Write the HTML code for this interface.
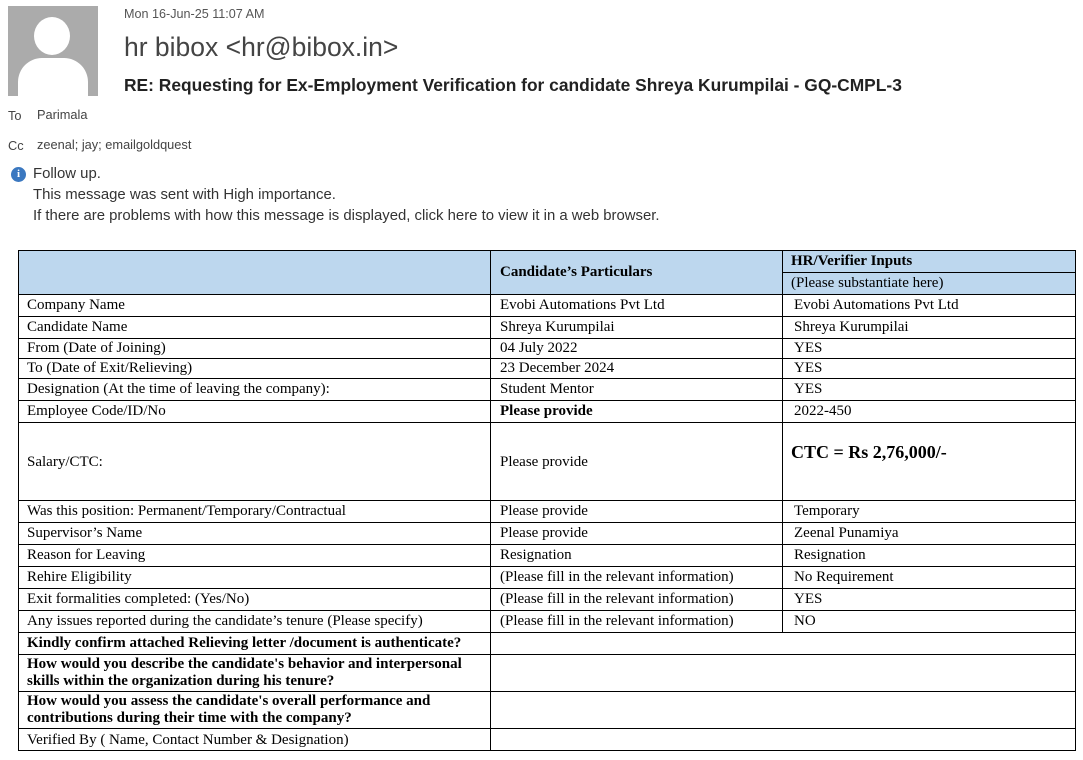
<!DOCTYPE html>
<html><head><meta charset="utf-8"><style>
body{margin:0;width:1083px;height:760px;background:#fff;position:relative;overflow:hidden;font-family:"Liberation Sans","DejaVu Sans",sans-serif;}
.a{position:absolute;white-space:nowrap}
.c{position:absolute;box-sizing:border-box;border-left:1px solid #000;border-top:1px solid #000;display:flex;align-items:center;font-family:"Liberation Serif",serif;font-size:15px;color:#000;white-space:nowrap;line-height:17px}
.b{font-weight:bold}
.blue{background:#bdd7ee}
</style></head><body>
<div class="a" style="left:8px;top:6px;width:90px;height:90px;background:#ababab;overflow:hidden">
<div style="position:absolute;left:26px;top:11px;width:36px;height:38px;border-radius:50%;background:#fff"></div>
<div style="position:absolute;left:10px;top:52px;width:70px;height:50px;border-radius:24px 24px 0 0;background:#fff"></div>
</div>
<div class="a" style="left:124px;top:7px;font-size:12.6px;color:#555">Mon 16-Jun-25 11:07 AM</div>
<div class="a" style="left:124px;top:32px;font-size:26.5px;color:#444">hr bibox &lt;hr@bibox.in&gt;</div>
<div class="a" style="left:124px;top:75px;font-size:17.4px;font-weight:bold;color:#222">RE: Requesting for Ex-Employment Verification for candidate Shreya Kurumpilai - GQ-CMPL-3</div>
<div class="a" style="left:8px;top:108px;font-size:12.8px;color:#444">To</div>
<div class="a" style="left:37px;top:107px;font-size:12.8px;color:#444">Parimala</div>
<div class="a" style="left:8px;top:138px;font-size:12.8px;color:#444">Cc</div>
<div class="a" style="left:37px;top:137px;font-size:12.8px;color:#444">zeenal; jay; emailgoldquest</div>
<div class="a" style="left:11px;top:167px;width:15px;height:15px;border-radius:50%;background:#3b78c0;color:#fff;font-size:11px;font-weight:bold;text-align:center;line-height:15px;font-family:'Liberation Serif',serif">i</div>
<div class="a" style="left:33px;top:166px;font-size:14.9px;color:#333">Follow up.</div>
<div class="a" style="left:33px;top:187px;font-size:14.9px;color:#333">This message was sent with High importance.</div>
<div class="a" style="left:33px;top:208px;font-size:14.9px;color:#333">If there are problems with how this message is displayed, click here to view it in a web browser.</div>

<div style="position:absolute;left:18px;top:250px;width:1058px;height:501px;box-sizing:border-box;border-right:1px solid #000;border-bottom:1px solid #000"></div>
<div class="c blue" style="left:18px;top:250px;width:472px;height:44px"></div>
<div class="c blue b" style="left:490px;top:250px;width:292px;height:44px;padding-left:9px">Candidate’s Particulars</div>
<div class="c blue b" style="left:782px;top:250px;width:293px;height:22px;padding-left:8px">HR/Verifier Inputs</div>
<div class="c blue" style="left:782px;top:272px;width:293px;height:22px;padding-left:8px">(Please substantiate here)</div>

<div class="c" style="left:18px;top:294px;width:472px;height:22px;padding-left:8px">Company Name</div>
<div class="c" style="left:490px;top:294px;width:292px;height:22px;padding-left:9px">Evobi Automations Pvt Ltd</div>
<div class="c" style="left:782px;top:294px;width:293px;height:22px;padding-left:11px">Evobi Automations Pvt Ltd</div>

<div class="c" style="left:18px;top:316px;width:472px;height:22px;padding-left:8px">Candidate Name</div>
<div class="c" style="left:490px;top:316px;width:292px;height:22px;padding-left:9px">Shreya Kurumpilai</div>
<div class="c" style="left:782px;top:316px;width:293px;height:22px;padding-left:11px">Shreya Kurumpilai</div>

<div class="c" style="left:18px;top:338px;width:472px;height:20px;padding-left:8px">From (Date of Joining)</div>
<div class="c" style="left:490px;top:338px;width:292px;height:20px;padding-left:9px">04 July 2022</div>
<div class="c" style="left:782px;top:338px;width:293px;height:20px;padding-left:11px">YES</div>

<div class="c" style="left:18px;top:358px;width:472px;height:20px;padding-left:8px">To (Date of Exit/Relieving)</div>
<div class="c" style="left:490px;top:358px;width:292px;height:20px;padding-left:9px">23 December 2024</div>
<div class="c" style="left:782px;top:358px;width:293px;height:20px;padding-left:11px">YES</div>

<div class="c" style="left:18px;top:378px;width:472px;height:22px;padding-left:8px">Designation (At the time of leaving the company):</div>
<div class="c" style="left:490px;top:378px;width:292px;height:22px;padding-left:9px">Student Mentor</div>
<div class="c" style="left:782px;top:378px;width:293px;height:22px;padding-left:11px">YES</div>

<div class="c" style="left:18px;top:400px;width:472px;height:22px;padding-left:8px">Employee Code/ID/No</div>
<div class="c b" style="left:490px;top:400px;width:292px;height:22px;padding-left:9px">Please provide</div>
<div class="c" style="left:782px;top:400px;width:293px;height:22px;padding-left:11px">2022-450</div>

<div class="c" style="left:18px;top:422px;width:472px;height:78px;padding-left:8px;padding-top:1px">Salary/CTC:</div>
<div class="c" style="left:490px;top:422px;width:292px;height:78px;padding-left:9px;padding-top:1px">Please provide</div>
<div class="c b" style="left:782px;top:422px;width:293px;height:78px;padding-left:8px;align-items:flex-start;padding-top:19px;font-size:18px;line-height:20px">CTC = Rs 2,76,000/-</div>

<div class="c" style="left:18px;top:500px;width:472px;height:22px;padding-left:8px">Was this position: Permanent/Temporary/Contractual</div>
<div class="c" style="left:490px;top:500px;width:292px;height:22px;padding-left:9px">Please provide</div>
<div class="c" style="left:782px;top:500px;width:293px;height:22px;padding-left:11px">Temporary</div>

<div class="c" style="left:18px;top:522px;width:472px;height:22px;padding-left:8px">Supervisor’s Name</div>
<div class="c" style="left:490px;top:522px;width:292px;height:22px;padding-left:9px">Please provide</div>
<div class="c" style="left:782px;top:522px;width:293px;height:22px;padding-left:11px">Zeenal Punamiya</div>

<div class="c" style="left:18px;top:544px;width:472px;height:22px;padding-left:8px">Reason for Leaving</div>
<div class="c" style="left:490px;top:544px;width:292px;height:22px;padding-left:9px">Resignation</div>
<div class="c" style="left:782px;top:544px;width:293px;height:22px;padding-left:11px">Resignation</div>

<div class="c" style="left:18px;top:566px;width:472px;height:22px;padding-left:8px">Rehire Eligibility</div>
<div class="c" style="left:490px;top:566px;width:292px;height:22px;padding-left:9px">(Please fill in the relevant information)</div>
<div class="c" style="left:782px;top:566px;width:293px;height:22px;padding-left:11px">No Requirement</div>

<div class="c" style="left:18px;top:588px;width:472px;height:22px;padding-left:8px">Exit formalities completed: (Yes/No)</div>
<div class="c" style="left:490px;top:588px;width:292px;height:22px;padding-left:9px">(Please fill in the relevant information)</div>
<div class="c" style="left:782px;top:588px;width:293px;height:22px;padding-left:11px">YES</div>

<div class="c" style="left:18px;top:610px;width:472px;height:22px;padding-left:8px">Any issues reported during the candidate’s tenure (Please specify)</div>
<div class="c" style="left:490px;top:610px;width:292px;height:22px;padding-left:9px">(Please fill in the relevant information)</div>
<div class="c" style="left:782px;top:610px;width:293px;height:22px;padding-left:11px">NO</div>

<div class="c b" style="left:18px;top:632px;width:472px;height:22px;padding-left:8px">Kindly confirm attached Relieving letter /document is authenticate?</div>
<div class="c" style="left:490px;top:632px;width:585px;height:22px"></div>

<div class="c b" style="left:18px;top:654px;width:472px;height:37px;padding-left:8px;padding-right:20px;white-space:normal;line-height:17px">How would you describe the candidate's behavior and interpersonal skills within the organization during his tenure?</div>
<div class="c" style="left:490px;top:654px;width:585px;height:37px"></div>

<div class="c b" style="left:18px;top:691px;width:472px;height:37px;padding-left:8px;padding-right:20px;white-space:normal;line-height:17px">How would you assess the candidate's overall performance and contributions during their time with the company?</div>
<div class="c" style="left:490px;top:691px;width:585px;height:37px"></div>

<div class="c" style="left:18px;top:728px;width:472px;height:23px;padding-left:8px">Verified By ( Name, Contact Number &amp; Designation)</div>
<div class="c" style="left:490px;top:728px;width:585px;height:23px"></div>
</body></html>
